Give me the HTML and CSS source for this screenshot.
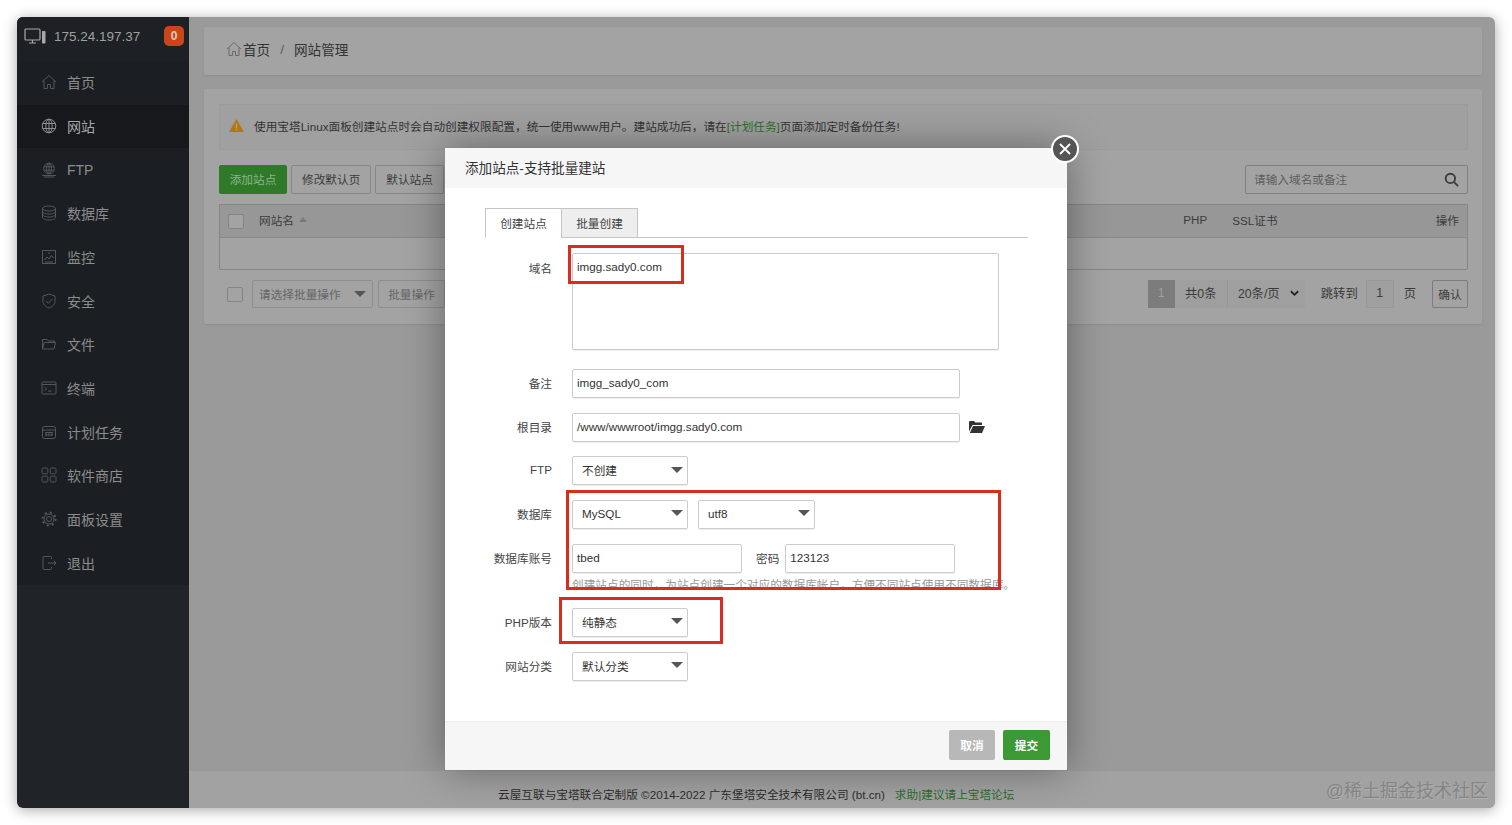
FILE: index.html
```html
<!DOCTYPE html>
<html lang="zh-CN">
<head>
<meta charset="utf-8">
<title>网站管理</title>
<link rel="stylesheet" href="styles.css">
</head>
<body>
<div class="window">
  <aside class="sidebar">
    <div class="host">
      <svg class="host-icon" viewBox="0 0 23 17" fill="none" stroke="#a8a8a8" stroke-width="1.2"><rect x="1" y="1" width="15" height="11" rx="1"/><path d="M5 15h7M8.5 12v3"/><rect x="18" y="3" width="3.5" height="12.5" rx=".8" fill="#a8a8a8" stroke="none"/></svg>
      <span class="host-ip">175.24.197.37</span>
      <span class="badge">0</span>
    </div>
    <nav class="menu">
      <a class="menu-item"><svg class="mi" viewBox="0 0 16 16"><path d="M1 8 8 1.5 15 8M3 6.5v8h3.5v-4h3v4H13v-8"/></svg>首页</a>
      <a class="menu-item active"><svg class="mi" viewBox="0 0 16 16"><circle cx="8" cy="8" r="6.8"/><ellipse cx="8" cy="8" rx="3.2" ry="6.8"/><path d="M1.5 5.5h13M1.5 10.500h13M8 1v14"/></svg>网站</a>
      <a class="menu-item"><svg class="mi" viewBox="0 0 16 16"><circle cx="8" cy="6.500" r="5.300"/><ellipse cx="8" cy="6.500" rx="2.500" ry="5.300"/><path d="M3 4.800h10M3 8.200h10M8 1v11M1 13.500h14M3 15h10"/></svg>FTP</a>
      <a class="menu-item"><svg class="mi" viewBox="0 0 16 16"><ellipse cx="8" cy="3.500" rx="6.500" ry="2.500"/><path d="M1.500 3.500v9c0 1.400 2.900 2.500 6.500 2.500s6.500-1.100 6.500-2.500v-9M1.500 6.500c0 1.400 2.900 2.500 6.500 2.500s6.500-1.100 6.500-2.500M1.500 9.500c0 1.400 2.900 2.500 6.500 2.500s6.500-1.100 6.500-2.500"/></svg>数据库</a>
      <a class="menu-item"><svg class="mi" viewBox="0 0 16 16"><rect x="1.500" y="1.500" width="13" height="13"/><path d="M3.500 11 6 8l2 2 2.500-3.500L12.500 9M4 13h8M7 4h2"/></svg>监控</a>
      <a class="menu-item"><svg class="mi" viewBox="0 0 16 16"><path d="M8 1 14 3v5.500c0 3-2.500 5.200-6 6.500-3.500-1.300-6-3.500-6-6.500V3zM5 8l2.300 2.300L11.300 6"/></svg>安全</a>
      <a class="menu-item"><svg class="mi" viewBox="0 0 16 16"><path d="M1.500 13V3.500h4.500l1.300 1.500h6.200v1.500M1.500 13l1.800-6.500h11.200L13 13z"/></svg>文件</a>
      <a class="menu-item"><svg class="mi" viewBox="0 0 16 16"><rect x="1" y="2" width="14" height="12" rx="1"/><path d="M1 4.500h14M3.500 7l2.200 1.800-2.200 1.700M7 11h3.500"/></svg>终端</a>
      <a class="menu-item"><svg class="mi" viewBox="0 0 16 16"><rect x="1.500" y="2.500" width="13" height="12" rx="2"/><path d="M1.500 6h13M4 8.500h8M4 11h8M5 8v4M8 8v4M11 8v4"/></svg>计划任务</a>
      <a class="menu-item"><svg class="mi" viewBox="0 0 16 16"><rect x="1" y="1" width="5.800" height="5.800" rx="1.200"/><rect x="9.200" y="1" width="5.800" height="5.800" rx="1.200"/><rect x="1" y="9.200" width="5.800" height="5.800" rx="1.200"/><rect x="9.200" y="9.200" width="5.800" height="5.800" rx="1.200"/></svg>软件商店</a>
      <a class="menu-item"><svg class="mi" viewBox="0 0 16 16"><circle cx="8" cy="8" r="2.500"/><circle cx="8" cy="8" r="5"/><circle cx="8" cy="8" r="6.500" stroke-width="2" stroke-dasharray="2 3.100"/></svg>面板设置</a>
      <a class="menu-item"><svg class="mi" viewBox="0 0 16 16"><path d="M10.500 4V2.500a1 1 0 0 0-1-1H3a1 1 0 0 0-1 1v11a1 1 0 0 0 1 1h6.500a1 1 0 0 0 1-1V12M7 8h8M12.800 5.800 15 8l-2.200 2.200"/></svg>退出</a>
    </nav>
    <div class="sidebar-rest"></div>
  </aside>

  <main class="main">
    <div class="content">
      <div class="panel crumbs">
        <svg class="crumb-home" viewBox="0 0 16 16" fill="none" stroke="#6a6a6a" stroke-width="1"><path d="M1 8 8 1.500 15 8M3 6.500v8h3.500v-4h3v4H13v-8"/></svg>
        <span>首页</span><span class="crumb-sep">/</span><span>网站管理</span>
      </div>
      <section class="panel sites">
        <div class="alert">
          <svg class="alert-icon" viewBox="0 0 16 14"><path d="M8 0 16 14H0z" fill="#b8750d"/><path d="M7.200 4.500h1.600v5H7.200zM7.200 10.500h1.600v1.600H7.200z" fill="#a3a3a3"/></svg>
          <span>使用宝塔Linux面板创建站点时会自动创建权限配置，统一使用www用户。建站成功后，请在<span class="green">[计划任务]</span>页面添加定时备份任务!</span>
        </div>
        <div class="toolbar">
          <div class="btn btn-green">添加站点</div>
          <div class="btn">修改默认页</div>
          <div class="btn">默认站点</div>
          <div class="search"><span>请输入域名或备注</span>
            <svg class="search-icon" viewBox="0 0 16 16" fill="none" stroke="#3c3c3c" stroke-width="2"><circle cx="6.800" cy="6.800" r="5"/><path d="M10.500 10.500 15 15"/></svg>
          </div>
        </div>
        <div class="table">
          <div class="thead">
            <span class="check"></span><span class="th th-name">网站名</span><span class="sort"></span>
            <span class="th th-php">PHP</span><span class="th th-ssl">SSL证书</span><span class="th th-op">操作</span>
          </div>
          <div class="tbody"></div>
        </div>
        <div class="bottom">
          <span class="check"></span>
          <div class="bulk"><span>请选择批量操作</span><span class="caret"></span></div>
          <div class="btn btn-bulk">批量操作</div>
          <div class="pager">
            <span class="page-cur">1</span>
            <span class="page-total">共0条</span>
            <span class="page-size">20条/页<svg class="chev" viewBox="0 0 10 7" fill="none" stroke="#222" stroke-width="2"><path d="M1 1l4 4 4-4"/></svg></span>
            <span class="page-go">跳转到</span>
            <span class="page-input">1</span>
            <span class="page-unit">页</span>
            <span class="btn page-ok">确认</span>
          </div>
        </div>
      </section>
    </div>
    <footer class="footer">云屋互联与宝塔联合定制版 ©2014-2022 广东堡塔安全技术有限公司 (bt.cn)<span class="footer-link">求助|建议请上宝塔论坛</span></footer>
  </main>

  <div class="modal">
    <button class="close" aria-label="关闭"><svg viewBox="0 0 12 12" fill="none" stroke="#fff" stroke-width="1.800"><path d="M1 1l10 10M11 1 1 11"/></svg></button>
    <header class="modal-head">添加站点-支持批量建站</header>
    <div class="modal-body">
      <div class="tabs"><span class="tab tab-on">创建站点</span><span class="tab">批量创建</span></div>
      <div class="row row-area"><label class="lab">域名</label><div class="field area">imgg.sady0.com</div></div>
      <div class="row"><label class="lab">备注</label><div class="field w388">imgg_sady0_com</div></div>
      <div class="row"><label class="lab">根目录</label><div class="field w388">/www/wwwroot/imgg.sady0.com</div>
        <svg class="open-folder" viewBox="0 0 16 13"><path d="M0 11.500V2a1 1 0 0 1 1-1h4l1.500 1.500H12a1 1 0 0 1 1 1V5H3.500L0 11.500zM4 6h12l-3 7H.8z" fill="#333"/></svg></div>
      <div class="row"><label class="lab">FTP</label><div class="field sel">不创建<span class="caret"></span></div></div>
      <div class="row"><label class="lab">数据库</label><div class="field sel">MySQL<span class="caret"></span></div><div class="field sel gap10">utf8<span class="caret"></span></div></div>
      <div class="row row-tight"><label class="lab">数据库账号</label><div class="field w170">tbed</div><span class="lab-inline">密码</span><div class="field w170b">123123</div></div>
      <p class="hint">创建站点的同时，为站点创建一个对应的数据库帐户，方便不同站点使用不同数据库。</p>
      <div class="row"><label class="lab">PHP版本</label><div class="field sel">纯静态<span class="caret"></span></div></div>
      <div class="row"><label class="lab">网站分类</label><div class="field sel">默认分类<span class="caret"></span></div></div>
    </div>
    <footer class="modal-foot"><div class="mbtn mbtn-gray">取消</div><div class="mbtn mbtn-green">提交</div></footer>
    <i class="mark mark-domain"></i>
    <i class="mark mark-db"></i>
    <i class="mark mark-php"></i>
  </div>

  <div class="watermark">@稀土掘金技术社区</div>
</div>
</body>
</html>
```
FILE: styles.css
```css
* { box-sizing: border-box; }
html, body { height: 100%; }
body {
  margin: 0;
  padding: 17px;
  background: #fff;
  font-family: "Liberation Sans", "Noto Sans CJK SC", sans-serif;
  font-size: 11.670px;
  color: #3a3a3a;
  overflow: hidden;
}
.window {
  position: relative;
  display: flex;
  width: 1478px;
  height: 791px;
  border-radius: 6px;
  overflow: hidden;
  box-shadow: 0 2px 14px rgba(0, 0, 0, .35);
}

/* sidebar */
.sidebar { width: 172px; flex: none; display: flex; flex-direction: column; background: #202328; }
.host { height: 44px; display: flex; align-items: center; padding: 0 5px 6px 7px; background: #1d2024; color: #a0a0a0; font-size: 13.500px; }
.host-icon { width: 23px; height: 17px; margin-right: 7px; }
.host-ip { flex: 1; }
.badge { width: 20px; height: 20px; border-radius: 5px; background: #c9461a; color: #e6c9b8; font-size: 12px; font-weight: 700; display: flex; align-items: center; justify-content: center; }
.menu { display: flex; flex-direction: column; background: #1b1e22; }
.menu-item { height: 43.670px; display: flex; align-items: center; gap: 10px; padding: 0 0 1px 24px; color: #8c8c8c; font-size: 14px; }
.menu-item.active { background: #16181c; color: #a8a8a8; }
.mi { width: 16px; height: 16px; fill: none; stroke: #55585b; stroke-width: 1; }
.active .mi { stroke: #8f8f8f; }
.sidebar-rest { flex: 1; }

/* main */
.main { flex: 1; display: flex; flex-direction: column; background: #9a9a9a; min-width: 0; }
.content { flex: 1; padding: 10px 13px 0 15px; display: flex; flex-direction: column; gap: 14px; }
.panel { background: #a3a3a3; border-radius: 2px; box-shadow: 0 1px 2px rgba(0, 0, 0, .08); }
.crumbs { height: 48px; display: flex; align-items: center; padding: 0 0 4px 22px; font-size: 13.600px; color: #333; }
.crumb-home { width: 16px; height: 16px; margin-right: 1px; }
.crumb-sep { margin: 0 10px; color: #5a5a5a; }
.sites { height: 235px; padding: 15px 14px 0 15px; }
.alert { height: 46px; display: flex; align-items: center; gap: 10px; padding: 0 0 3px 9px; background: #a0a0a0; border: 1px solid #9b9b9b; color: #333; }
.alert-icon { width: 15px; height: 13px; flex: none; }
.green { color: #2c6e2c; }
.toolbar { display: flex; margin-top: 15px; gap: 4px; height: 29px; }
.btn { height: 29px; padding: 0 10px 2px; display: flex; align-items: center; justify-content: center; white-space: nowrap; background: #a3a3a3; border: 1px solid #868686; border-radius: 2px; color: #3a3a3a; }
.btn-green { width: 68px; background: #2e7a29; border-color: #2e7a29; color: #8fb58c; }
.search { margin-left: auto; width: 223px; height: 29px; display: flex; align-items: center; justify-content: space-between; padding: 0 8px 0 8px; border: 1px solid #808080; border-radius: 2px; color: #5e5e5e; }
.search span { padding-bottom: 2px; }
.search-icon { width: 15px; height: 15px; }
.table { margin-top: 10px; height: 66px; border: 1px solid #868686; border-radius: 1px; }
.thead { height: 33px; display: flex; align-items: center; padding-left: 8px; background: #979797; border-bottom: 1px solid #8a8a8a; color: #3c3c3c; }
.th { margin-bottom: 3px; }
.check { width: 16px; height: 15px; flex: none; background: #a3a3a3; border: 1px solid #848484; border-radius: 2px; }
.th-name { margin-left: 15px; }
.sort { margin: 0 0 3px 5px; width: 0; height: 0; border: 4.500px solid transparent; border-top: 0; border-bottom: 5px solid #7a7a7a; }
.th-php { margin-left: auto; }
.th-ssl { margin-left: 25px; }
.th-op { margin-left: 158px; margin-right: 8px; }
.bottom { margin-top: 10px; height: 28px; display: flex; align-items: center; padding-left: 8px; }
.bulk { margin-left: 9px; width: 121px; height: 28px; display: flex; align-items: center; justify-content: space-between; padding: 0 6px 0 6px; border: 1px solid #8e8e8e; border-radius: 2px; color: #666; }
.bulk span:first-child { padding-bottom: 2px; }
.caret { width: 0; height: 0; flex: none; border-left: 6px solid transparent; border-right: 6px solid transparent; border-top: 6px solid #555; }
.btn-bulk { margin-left: 5px; width: 67px; height: 28px; padding: 0 0 2px; border-color: #8e8e8e; color: #666; }
.pager { margin-left: auto; display: flex; align-items: center; height: 28px; font-size: 12.300px; }
.pager > span { height: 28px; padding-bottom: 2px; display: flex; align-items: center; justify-content: center; }
.page-cur { width: 27px; background: #7c7c7c; color: #a0a0a0; }
.page-total { width: 52px; background: #9f9f9f; }
.page-size { width: 78px; gap: 10px; background: #9f9f9f; border-left: 1px solid #979797; padding-left: 4px; }
.chev { width: 9px; height: 7px; }
.page-go { margin-left: 16px; }
.page-input { margin-left: 8px; width: 28px; background: #9f9f9f; border: 1px solid #979797; }
.page-unit { margin-left: 10px; }
.pager > .page-ok { margin-left: 16px; width: 36px; padding: 0 0 2px; border-color: #7c7c7c; font-size: 11.670px; }
.footer { height: 37px; flex: none; padding: 12px 0 0 309px; background: #a2a2a2; color: #2e2e2e; line-height: 24px; }
.footer-link { margin-left: 10px; color: #2c6e2c; }

/* modal */
.modal { position: absolute; left: 428px; top: 131px; width: 622px; height: 622px; display: flex; flex-direction: column; background: #fff; box-shadow: 0 0 38px rgba(0, 0, 0, .38); }
.close { position: absolute; right: -12px; top: -13px; width: 28px; height: 28px; padding: 0; display: flex; align-items: center; justify-content: center; background: #555; border: 2px solid #fff; border-radius: 50%; }
.close svg { width: 12px; height: 12px; }
.modal-head { height: 40px; flex: none; padding: 0 0 2px 20px; display: flex; align-items: center; background: #f6f6f6; font-size: 13.600px; color: #333; }
.modal-body { flex: 1; padding: 20px 39px 0 40px; }
.tabs { display: flex; height: 30px; width: 543px; border-bottom: 1px solid #c4c4c4; margin-bottom: 15px; }
.tab { width: 77px; height: 30px; padding-bottom: 1px; display: flex; align-items: center; justify-content: center; background: #eee; border: 1px solid #c4c4c4; color: #444; }
.tab-on { width: 76px; background: #fff; border-bottom-color: #fff; border-right: 0; }
.row { display: flex; align-items: center; height: 29px; margin-bottom: 14.670px; }
.row-area { height: 97px; align-items: flex-start; margin-bottom: 19px; }
.row-tight { margin-bottom: 0; }
.lab { width: 67px; flex: none; text-align: right; margin-right: 20px; padding-bottom: 2px; color: #444; }
.row-area .lab { padding-top: 6px; }
.field { height: 100%; display: flex; align-items: center; padding: 0 0 2px 4px; background: #fff; border: 1px solid #ccc; border-radius: 2px; box-shadow: 0 1px 1px rgba(0, 0, 0, .07); color: #333; }
.area { width: 427px; align-items: flex-start; padding-top: 6px; }
.w388 { width: 388px; }
.sel { width: 116px; padding: 0 4px 2px 9px; justify-content: space-between; }
.gap10 { margin-left: 10px; width: 117px; }
.w170 { width: 170px; }
.lab-inline { margin: 0 6px 0 14px; padding-bottom: 2px; color: #444; }
.w170b { width: 170px; }
.open-folder { width: 16px; height: 13px; margin: 0 0 2px 9px; }
.hint { margin: 4px 0 15.300px 87px; width: 460px; line-height: 16px; color: #999; white-space: nowrap; }
.modal-foot { height: 49px; flex: none; display: flex; align-items: center; justify-content: flex-end; gap: 8px; padding: 0 17px 2px 0; background: #f6f6f6; border-top: 1px solid #eee; }
.mbtn { width: 46px; height: 30px; padding-bottom: 2px; display: flex; align-items: center; justify-content: center; border-radius: 2px; color: #fff; font-weight: 700; }
.mbtn-gray { background: #b8b8b8; }
.mbtn-green { background: #3c9a35; width: 47px; }
.mark { position: absolute; border: 3px solid #d92e1e; }
.mark-domain { left: 123px; top: 97px; width: 116px; height: 39px; }
.mark-db { left: 121px; top: 342px; width: 435px; height: 100px; }
.mark-php { left: 114px; top: 449px; width: 164px; height: 47px; }

.watermark { position: absolute; right: 7px; bottom: 4px; font-size: 18px; line-height: 26px; color: #858585; text-shadow: 1px 1px 0 #b0b0b0; }
```
